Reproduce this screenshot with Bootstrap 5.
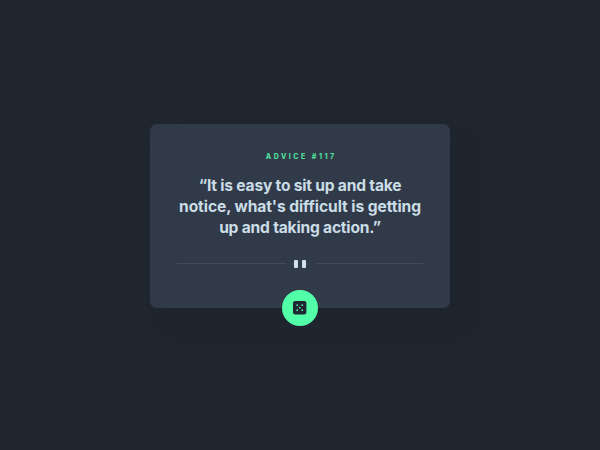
<!DOCTYPE html>
<html lang="en">
<head>
<meta charset="utf-8">
<meta name="viewport" content="width=device-width, initial-scale=1">
<title>Advice generator</title>
<link href="https://cdn.jsdelivr.net/npm/bootstrap@5.3.0/dist/css/bootstrap.min.css" rel="stylesheet">
<style>
  body { background: #1f2630; font-family: "Inter", sans-serif; }
  main { height: 450px; padding-top: 124px; }
  .advice { width: 300px; height: 184px; padding: 28px 27px 0; background: #313a48; border-radius: 7px; box-shadow: 16px 16px 28px rgba(0, 0, 0, .06); }
  .advice-id { color: #4fdc9c; font-size: 7px; font-weight: 800; line-height: 9px; letter-spacing: 2.5px; margin-right: -2.5px; }
  .quote { margin-top: 14px; color: #cadde6; font-size: 15.6px; font-weight: 700; line-height: 21.2px; letter-spacing: -.21px; white-space: nowrap; }
  .quote .wide { letter-spacing: -.08px; }
  .divider { margin-top: 21px; }
  .rule { height: 1px; background: #414b5b; }
  .bar { width: 3.8px; height: 8px; border-radius: 1px; background: #cee3e9; }
  .dice { width: 36px; height: 36px; margin-bottom: -18px; background: #52ffa8; }
</style>
</head>
<body>
<main class="d-flex justify-content-center align-items-start">
  <section class="advice d-flex flex-column align-items-center text-center">
    <h1 class="advice-id mb-0">ADVICE #117</h1>
    <p class="quote mb-0">“It is easy to sit up and take<br><span class="wide">notice, what's difficult is getting</span><br>up and taking action.”</p>
    <div class="divider d-flex align-items-center w-100">
      <div class="rule flex-fill"></div>
      <div class="d-flex justify-content-center" style="gap:3.8px;width:29px"><span class="bar"></span><span class="bar"></span></div>
      <div class="rule flex-fill"></div>
    </div>
    <button type="button" class="dice btn rounded-circle border-0 p-0 mt-auto d-flex flex-shrink-0 align-items-center justify-content-center" aria-label="New advice">
      <svg width="13.4" height="13.4" viewBox="0 0 24 24"><rect width="24" height="24" rx="4" fill="#202733"/><g fill="#52ffa8"><circle cx="7.5" cy="7.5" r="1.5"/><circle cx="16.5" cy="7.5" r="1.5"/><circle cx="12" cy="12" r="1.5"/><circle cx="7.5" cy="16.5" r="1.5"/><circle cx="16.5" cy="16.5" r="1.5"/></g></svg>
    </button>
  </section>
</main>
<script src="https://cdn.jsdelivr.net/npm/bootstrap@5.3.0/dist/js/bootstrap.bundle.min.js"></script>
</body>
</html>
